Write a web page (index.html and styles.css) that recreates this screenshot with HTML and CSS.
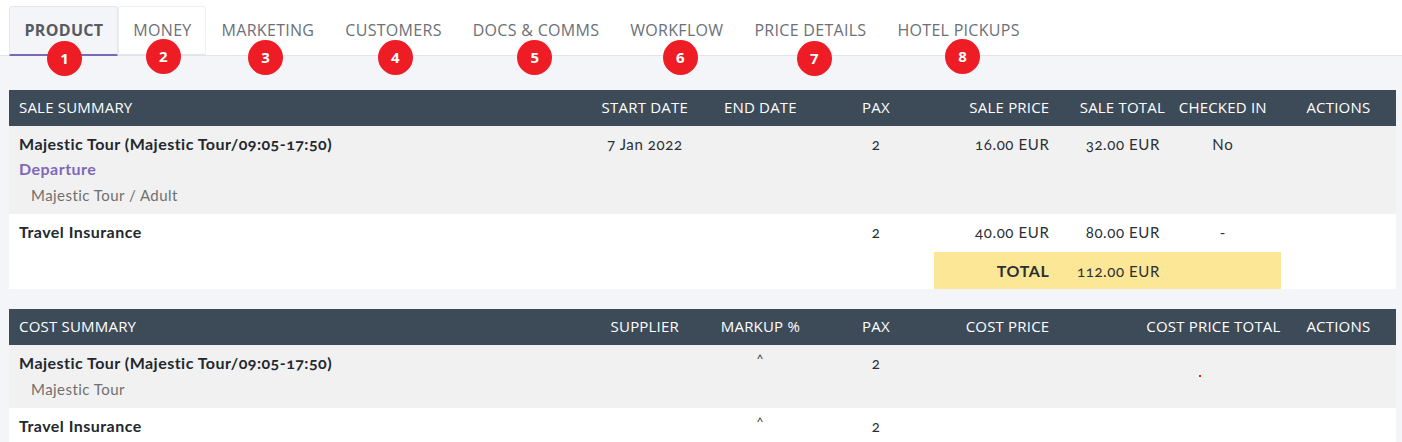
FILE: index.html
```html
<!DOCTYPE html>
<html lang="en">
<head>
<meta charset="utf-8">
<title>Booking summary</title>
<link rel="stylesheet" href="styles.css">
</head>
<body>
<nav class="tabs">
  <a class="tab tab-active">Product<span class="badge b1">1</span></a>
  <a class="tab tab-boxed">Money<span class="badge b2">2</span></a>
  <a class="tab">Marketing<span class="badge b3">3</span></a>
  <a class="tab">Customers<span class="badge b4">4</span></a>
  <a class="tab">Docs &amp; Comms<span class="badge b5">5</span></a>
  <a class="tab">Workflow<span class="badge b6">6</span></a>
  <a class="tab">Price Details<span class="badge b7">7</span></a>
  <a class="tab">Hotel Pickups<span class="badge b8">8</span></a>
</nav>
<main class="content">
  <section class="summary">
    <div class="row head">
      <div class="c5 first">Sale Summary</div>
      <div class="center">Start Date</div>
      <div class="center">End Date</div>
      <div class="center">Pax</div>
      <div class="right">Sale Price</div>
      <div class="right">Sale Total</div>
      <div class="center">Checked In</div>
      <div class="center">Actions</div>
    </div>
    <div class="row body grey tall">
      <div class="c5 first">
        <div class="name">Majestic Tour (Majestic Tour/09:05-17:50)</div>
        <div class="group">Departure</div>
        <div class="sub">Majestic Tour / Adult</div>
      </div>
      <div class="center">7 Jan 2022</div>
      <div></div>
      <div class="center">2</div>
      <div class="right">16.00 EUR</div>
      <div class="right inset">32.00 EUR</div>
      <div class="center">No</div>
      <div></div>
    </div>
    <div class="row body white">
      <div class="c5 first name">Travel Insurance</div>
      <div></div>
      <div></div>
      <div class="center">2</div>
      <div class="right">40.00 EUR</div>
      <div class="right inset">80.00 EUR</div>
      <div class="center">-</div>
      <div></div>
    </div>
    <div class="row body white total-row">
      <div class="c8"></div>
      <div class="right total-cell total-label">Total</div>
      <div class="right inset total-cell">112.00 EUR</div>
      <div class="total-cell"></div>
      <div></div>
    </div>
  </section>
  <section class="summary">
    <div class="row head">
      <div class="c5 first">Cost Summary</div>
      <div class="center">Supplier</div>
      <div class="center">Markup %</div>
      <div class="center">Pax</div>
      <div class="right">Cost Price</div>
      <div class="c2 right">Cost Price Total</div>
      <div class="center">Actions</div>
    </div>
    <div class="row body grey mid">
      <div class="c5 first">
        <div class="name">Majestic Tour (Majestic Tour/09:05-17:50)</div>
        <div class="sub">Majestic Tour</div>
      </div>
      <div></div>
      <div class="center caret">^</div>
      <div class="center">2</div>
      <div></div>
      <div class="c2 dot-cell"><span class="dot"></span></div>
      <div></div>
    </div>
    <div class="row body white">
      <div class="c5 first name">Travel Insurance</div>
      <div></div>
      <div class="center caret">^</div>
      <div class="center">2</div>
      <div></div>
      <div class="c2"></div>
      <div></div>
    </div>
  </section>
</main>
</body>
</html>
```
FILE: styles.css
```css
html, body { margin: 0; padding: 0; height: 442px; overflow: hidden; }
body {
  background: #f4f5f8;
  font-family: "Lato", "Noto Sans", sans-serif;
  font-size: 15px;
  letter-spacing: 0.6px;
  color: #2b2f36;
  font-variant-numeric: oldstyle-nums;
}
.tabs {
  display: flex;
  align-items: flex-end;
  height: 55px;
  padding-left: 9px;
  background: #fff;
  border-bottom: 1px solid #e2e4e9;
  font-family: "Open Sans", "Noto Sans", sans-serif;
  letter-spacing: 0.3px;
}
.tab {
  position: relative;
  height: 50px;
  box-sizing: border-box;
  margin-bottom: -1px;
  padding: 13px 14.5px 0;
  font-size: 16px;
  line-height: 20px;
  text-transform: uppercase;
  color: #6b7079;
  border: 1px solid transparent;
  border-bottom-width: 2px;
  border-radius: 3px 3px 0 0;
}
.tab-active {
  padding-right: 13.5px;
  background: #f4f5f8;
  border-color: #e4e6ec;
  border-bottom-color: #7c68b8;
  font-weight: 700;
  color: #555a63;
}
.tab-boxed {
  padding-right: 13.5px;
  border-color: #eef0f3;
  border-bottom-color: #e2e4e9;
  background: #fff;
}
.badge {
  position: absolute;
  width: 35px;
  height: 35px;
  border-radius: 50%;
  background: #ee1c25;
  color: #fff;
  font-size: 15px;
  font-weight: 700;
  line-height: 35px;
  letter-spacing: 0;
  text-align: center;
  font-variant-numeric: lining-nums;
}
.b1 { left: 37px; top: 34px; }
.b2 { left: 27px; top: 32px; }
.b3 { left: 41px; top: 33px; }
.b4 { left: 47px; top: 33px; }
.b5 { left: 59px; top: 33px; }
.b6 { left: 47px; top: 33px; }
.b7 { left: 57px; top: 34px; }
.b8 { left: 62px; top: 32px; }

.content { padding: 34px 5.8px 0 9px; }
.summary { margin-bottom: 20px; background: #fff; }
.row {
  display: grid;
  grid-template-columns: repeat(12, 1fr);
}
.c5 { grid-column: span 5; }
.c8 { grid-column: span 8; }
.c2 { grid-column: span 2; }
.head {
  height: 36px;
  box-sizing: border-box;
  padding-bottom: 2px;
  align-items: center;
  background: #3d4b59;
  color: #fff;
  font-family: "Open Sans", "Noto Sans", sans-serif;
  font-size: 15px;
  letter-spacing: 0.2px;
  text-transform: uppercase;
}
.first { padding-left: 10px; }
.center { text-align: center; }
.right { text-align: right; }
.inset { padding-right: 5px; }
.body { padding-top: 8px; box-sizing: border-box; height: 38px; line-height: 20px; }
.grey { background: #f1f1f1; }
.white { background: #fff; }
.tall { height: 88px; }
.mid { height: 63px; }
.name { font-weight: 700; color: #23272e; font-size: 16px; letter-spacing: 0.47px; line-height: 20px; }
.group { font-weight: 700; color: #7f68b9; font-size: 16px; letter-spacing: 0.47px; margin-top: 5px; }
.sub { color: #6f6f6f; letter-spacing: 0.45px; margin: 6px 0 0 12px; }
.total-row { padding-top: 0; height: 37px; align-items: stretch; }
.total-cell { background: #fbe795; padding-top: 9px; }
.total-label { font-weight: 700; font-size: 16px; text-transform: uppercase; }
.caret { font-size: 12px; line-height: 14px; margin-top: -1px; }
.dot-cell { position: relative; }
.dot {
  position: absolute;
  left: 150px;
  top: 22px;
  width: 2px;
  height: 2px;
  background: #ee1c25;
}
```
